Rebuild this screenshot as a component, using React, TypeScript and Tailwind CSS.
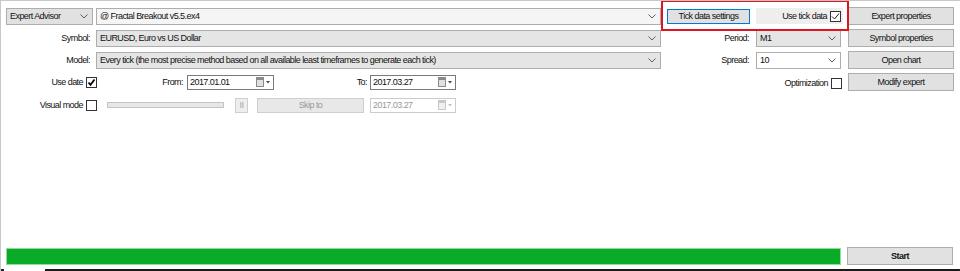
import React from "react";

const FONT = "font-['Liberation_Sans',Arial,sans-serif]";

function Chevron({ disabled = false }: { disabled?: boolean }) {
  return (
    <svg width="8" height="5" viewBox="0 0 8 5" className="shrink-0">
      <polyline
        points="0.5,0.5 4,4 7.5,0.5"
        fill="none"
        stroke={disabled ? "#b0b0b0" : "#606060"}
        strokeWidth="1"
      />
    </svg>
  );
}

function Combo({
  text,
  width,
  bg = "bg-[#e5e5e5]",
}: {
  text: string;
  width: string;
  bg?: string;
}) {
  return (
    <div
      className={`${width} ${bg} h-[17px] border border-[#adadad] flex items-center pl-[3px] pr-[4px] shrink-0`}
    >
      <span className="flex-1 truncate leading-none">{text}</span>
      <Chevron />
    </div>
  );
}

function Button({
  label,
  className = "",
  bold = false,
}: {
  label: string;
  className?: string;
  bold?: boolean;
}) {
  return (
    <div
      className={`w-[106px] h-[18px] bg-[#e1e1e1] border border-[#adadad] flex items-center justify-center shrink-0 leading-none ${
        bold ? "font-bold" : ""
      } ${className}`}
    >
      {label}
    </div>
  );
}

function CheckBox({ checked = false, thin = false }: { checked?: boolean; thin?: boolean }) {
  return (
    <div className="w-[11px] h-[11px] border border-[#333333] bg-white shrink-0 flex items-center justify-center">
      {checked &&
        (thin ? (
          <svg width="9" height="9" viewBox="0 0 9 9">
            <polyline points="1,4.5 3.5,7 8,1.5" fill="none" stroke="#222" strokeWidth="1" />
          </svg>
        ) : (
          <svg width="9" height="9" viewBox="0 0 9 9">
            <polyline points="1.5,4.5 3.5,6.8 7.5,1.5" fill="none" stroke="#000" strokeWidth="1.8" />
          </svg>
        ))}
    </div>
  );
}

function CalendarIcon({ disabled = false }: { disabled?: boolean }) {
  const c = disabled ? "#c8c8c8" : "#8a8a8a";
  return (
    <svg width="15" height="10" viewBox="0 0 15 10" className="shrink-0">
      <rect x="0.5" y="0.5" width="7" height="9" fill={disabled ? "#f0f0f0" : "#e0e0e0"} stroke={c} />
      <rect x="1" y="1" width="6" height="2" fill={c} />
      <polygon points="10,4 14,4 12,6.5" fill={disabled ? "#c0c0c0" : "#444"} />
    </svg>
  );
}

function DateBox({ value, width, disabled = false }: { value: string; width: string; disabled?: boolean }) {
  return (
    <div
      className={`${width} h-[15px] border ${
        disabled ? "border-[#cccccc] text-[#9a9a9a]" : "border-[#7a7a7a]"
      } bg-white flex items-center pl-[2px] pr-[2px] shrink-0`}
    >
      <span className="flex-1 leading-none">{value}</span>
      <CalendarIcon disabled={disabled} />
    </div>
  );
}

export default function App() {
  return (
    <div
      className={`relative w-[960px] h-[271px] bg-white border-l border-t border-[#c8c8c8] flex flex-col text-[9px] tracking-[-0.55px] text-[#111111] ${FONT} overflow-hidden`}
    >
      {/* row 1 */}
      <div className="flex items-center h-[18px] mt-[6px] pl-[5px]">
        <Combo text="Expert Advisor" width="w-[87px]" bg="bg-[#e1e1e1]" />
        <div className="ml-[3px]">
          <Combo text="@ Fractal Breakout  v5.5.ex4" width="w-[565px]" bg="bg-[#f5f5f5]" />
        </div>
        <div className="w-[187px] flex items-center">
          <div className="ml-[6px] w-[83px] h-[15px] bg-[#e1e1e1] border border-[#0078d7] flex items-center justify-center leading-none">
            Tick data settings
          </div>
          <div className="ml-[6px] w-[87px] h-[16px] bg-[#eeeeee] flex items-center justify-end pr-[2px] gap-[3px] leading-none">
            <span>Use tick data</span>
            <CheckBox checked thin />
          </div>
        </div>
        <Button label="Expert properties" />
      </div>

      {/* row 2 */}
      <div className="flex items-center h-[18px] mt-[4px] pl-[5px]">
        <span className="w-[87px] text-right pr-[3px] leading-none">Symbol:</span>
        <div className="ml-[3px]">
          <Combo text="EURUSD, Euro vs US Dollar" width="w-[565px]" />
        </div>
        <div className="w-[187px] flex items-center">
          <span className="w-[89px] text-right pr-[1px] leading-none">Period:</span>
          <div className="ml-[6px]">
            <Combo text="M1" width="w-[85px]" />
          </div>
        </div>
        <Button label="Symbol properties" />
      </div>

      {/* row 3 */}
      <div className="flex items-center h-[18px] mt-[4px] pl-[5px]">
        <span className="w-[87px] text-right pr-[3px] leading-none">Model:</span>
        <div className="ml-[3px]">
          <Combo
            text="Every tick (the most precise method based on all available least timeframes to generate each tick)"
            width="w-[565px]"
          />
        </div>
        <div className="w-[187px] flex items-center">
          <span className="w-[89px] text-right pr-[1px] leading-none">Spread:</span>
          <div className="ml-[6px]">
            <Combo text="10" width="w-[85px]" bg="bg-white" />
          </div>
        </div>
        <Button label="Open chart" />
      </div>

      {/* row 4 */}
      <div className="flex items-center h-[18px] mt-[4px] pl-[5px]">
        <span className="w-[77px] text-right leading-none">Use date</span>
        <div className="ml-[3px]">
          <CheckBox checked />
        </div>
        <span className="w-[86px] text-right leading-none">From:</span>
        <div className="ml-[4px]">
          <DateBox value="2017.01.01" width="w-[87px]" />
        </div>
        <span className="w-[93px] text-right leading-none">To:</span>
        <div className="ml-[3px]">
          <DateBox value="2017.03.27" width="w-[86px]" />
        </div>
        <div className="flex-1 flex items-center justify-end">
          <span className="leading-none pt-[3px]">Optimization</span>
          <div className="ml-[3px] mt-[3px]">
            <CheckBox />
          </div>
        </div>
        <div className="ml-[6px] mr-[6px]">
          <Button label="Modify expert" />
        </div>
      </div>

      {/* row 5 */}
      <div className="flex items-center h-[16px] mt-[6px] pl-[5px]">
        <span className="w-[77px] text-right leading-none">Visual mode</span>
        <div className="ml-[3px]">
          <CheckBox />
        </div>
        <div className="ml-[10px] w-[117px] h-[6px] bg-[#e7e7e7] border border-[#c4c4c4]" />
        <div className="ml-[11px] w-[13px] h-[15px] bg-[#eeeeee] border border-[#cfcfcf] flex items-center justify-center text-[#a8a8a8] leading-none">
          II
        </div>
        <div className="ml-[9px] w-[107px] h-[15px] bg-[#e8e8e8] border border-[#cfcfcf] flex items-center justify-center text-[#9a9a9a] leading-none">
          Skip to
        </div>
        <div className="ml-[6px]">
          <DateBox value="2017.03.27" width="w-[86px]" disabled />
        </div>
      </div>

      <div className="flex-1" />

      {/* bottom row */}
      <div className="flex items-center h-[18px] pl-[5px]">
        <div className="w-[835px] h-[17px] border border-[#8fdc9c] bg-[#0aab27]" />
        <div className="ml-[6px]">
          <Button label="Start" bold />
        </div>
      </div>
      <div className="flex mt-[4px] h-[2px]">
        <div className="w-[3px] bg-[#222222]" />
        <div className="ml-[41px] flex-1 bg-[#1a1a1a]" />
      </div>

      {/* annotation highlight */}
      <div className="absolute left-[660px] top-[-1px] w-[188px] h-[31px] border-2 border-[#e0141e] pointer-events-none" />
    </div>
  );
}
